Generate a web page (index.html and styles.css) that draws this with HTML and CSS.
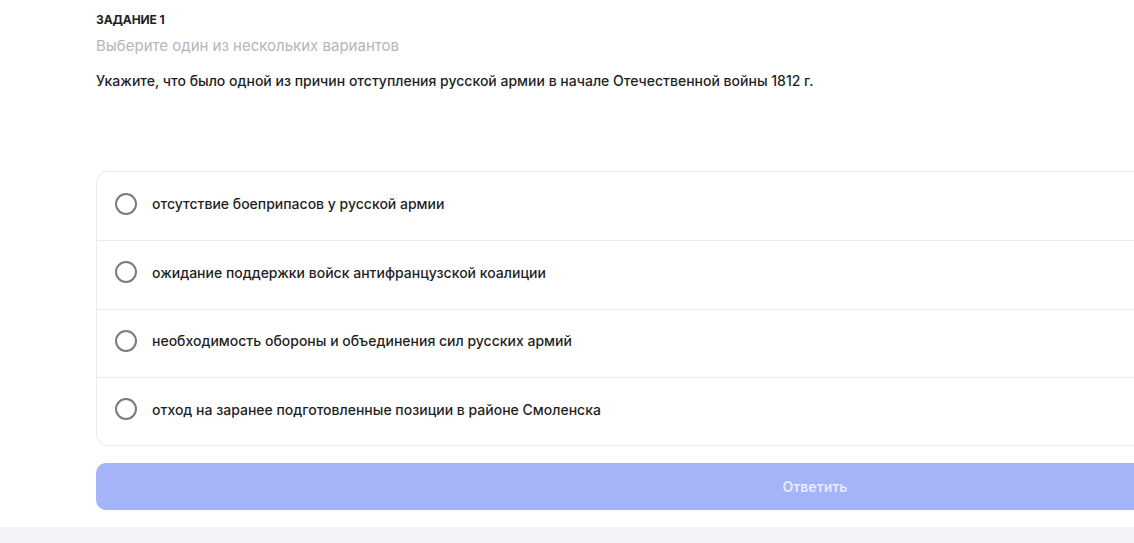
FILE: index.html
```html
<!DOCTYPE html>
<html lang="ru">
<head>
<meta charset="UTF-8">
<meta name="viewport" content="width=device-width, initial-scale=1.0">
<link rel="stylesheet" href="styles.css">
<title>Задание 1</title>
</head>
<body>

<main class="page">

<section class="task">

<h3 class="taskTitle">Задание 1</h3>
<p class="taskHint">Выберите один из нескольких вариантов</p>
<p class="taskQuestion">Укажите, что было одной из причин отступления русской армии в начале Отечественной войны 1812 г.</p>

<div class="options">
  <label class="option"><span class="radio"></span><span class="optionText">отсутствие боеприпасов у русской армии</span></label>
  <label class="option"><span class="radio"></span><span class="optionText">ожидание поддержки войск антифранцузской коалиции</span></label>
  <label class="option"><span class="radio"></span><span class="optionText">необходимость обороны и объединения сил русских армий</span></label>
  <label class="option"><span class="radio"></span><span class="optionText">отход на заранее подготовленные позиции в районе Смоленска</span></label>
</div>

<button class="answerBtn" disabled>Ответить</button>

</section>

<div class="footerBand"></div>

</main>

</body>
</html>
```

FILE: styles.css
```css
*:before,*,*:after{
margin:0;
padding:0;
box-sizing:border-box;
}

:root{
--text_main:#1f1f24;
--text_hint:#b5b5bc;
--line:#ebebee;
--radio:#7b7b83;
--btn_bg:#a5b4f8;
}

html,body{
height:100%;
overflow:hidden;
}

body{
background:#ffffff;
font-family:Inter, "Noto Sans", sans-serif;
color:var(--text_main);
}

.page{
display:flex;
flex-direction:column;
min-height:100%;
}

.task{
width:1438px;
margin-left:96px;
padding-top:12px;
}

.taskTitle{
font-size:12px;
font-weight:700;
text-transform:uppercase;
letter-spacing:-0.1px;
line-height:15px;
}

.taskHint{
margin-top:9px;
font-size:15px;
color:var(--text_hint);
line-height:19px;
}

.taskQuestion{
margin-top:17px;
font-size:14px;
font-weight:500;
line-height:18px;
}

.options{
margin-top:81px;
border:1px solid var(--line);
border-radius:12px;
display:flex;
flex-direction:column;
}

.option{
display:flex;
align-items:center;
gap:15px;
height:68.3px;
padding-left:18px;
padding-bottom:5px;
border-top:1px solid var(--line);
cursor:pointer;
}

.option:first-child{
border-top:none;
}

.radio{
width:22px;
height:22px;
border:2px solid var(--radio);
border-radius:50%;
flex-shrink:0;
}

.optionText{
font-size:14px;
font-weight:500;
}

.answerBtn{
display:block;
width:100%;
height:47px;
margin-top:17px;
border:none;
border-radius:10px;
background:var(--btn_bg);
color:rgba(255,255,255,0.75);
font-family:inherit;
font-size:14px;
font-weight:600;
}

.footerBand{
margin-top:17px;
flex:1;
background:#f3f3f7;
}
```
